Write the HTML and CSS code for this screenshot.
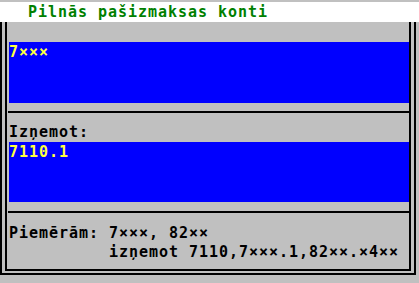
FILE: index.html
```html
<!DOCTYPE html>
<html>
<head>
<meta charset="utf-8">
<link rel="stylesheet" href="styles.css">
</head>
<body>
<div class="screen">
  <div class="title">Pilnās pašizmaksas konti</div>
  <div class="outer">
    <div class="inner">
      <section class="sec sec-first">
        <div class="field field-tall">7×××</div>
      </section>
      <div class="rule"></div>
      <section class="sec sec-second">
        <div class="label">Izņemot:</div>
        <div class="field">7110.1</div>
      </section>
      <div class="rule"></div>
      <section class="sec sec-help">
        <div class="help">
          <span>Piemērām:</span><span>7×××, 82××</span>
          <span></span><span>izņemot 7110,7×××.1,82××.×4××</span>
        </div>
      </section>
    </div>
  </div>
</div>
</body>
</html>
```

FILE: styles.css
```css
html, body {
  margin: 0;
  padding: 0;
  background: #c0c0c0;
}
body {
  width: 419px;
  height: 283px;
  overflow: hidden;
  font-family: "DejaVu Sans Mono", monospace;
  font-size: 15px;
  font-weight: bold;
  letter-spacing: 0.97px;
  line-height: 19px;
  color: #000;
}
.screen {
  padding-top: 2px;
}
.title {
  height: 20px;
  box-sizing: border-box;
  padding: 1px 0 0 28px;
  background: #fff;
  color: #008000;
  white-space: pre;
}
.outer {
  margin-right: 3px;
  border: 2px solid #000;
  border-top: none;
  padding: 0 3px 2px 3px;
}
.inner {
  border: 2px solid #000;
  border-top: none;
  height: 247px;
  display: flex;
  flex-direction: column;
}
.sec {
  padding-left: 2px;
}
.sec-first {
  padding-top: 20px;
  padding-bottom: 8px;
}
.sec-second {
  padding-bottom: 9px;
}
.label {
  padding-top: 10px;
  height: 19px;
}
.field {
  background: #0000ff;
  color: #ffff40;
  height: 60px;
  box-sizing: border-box;
  padding-top: 1px;
  white-space: pre;
}
.field-tall {
  height: 61px;
}
.rule {
  height: 2px;
  margin-left: 1px;
  background: #000;
}
.sec-help {
  padding-top: 11px;
}
.help {
  display: grid;
  grid-template-columns: 100px 1fr;
  white-space: pre;
}
```
